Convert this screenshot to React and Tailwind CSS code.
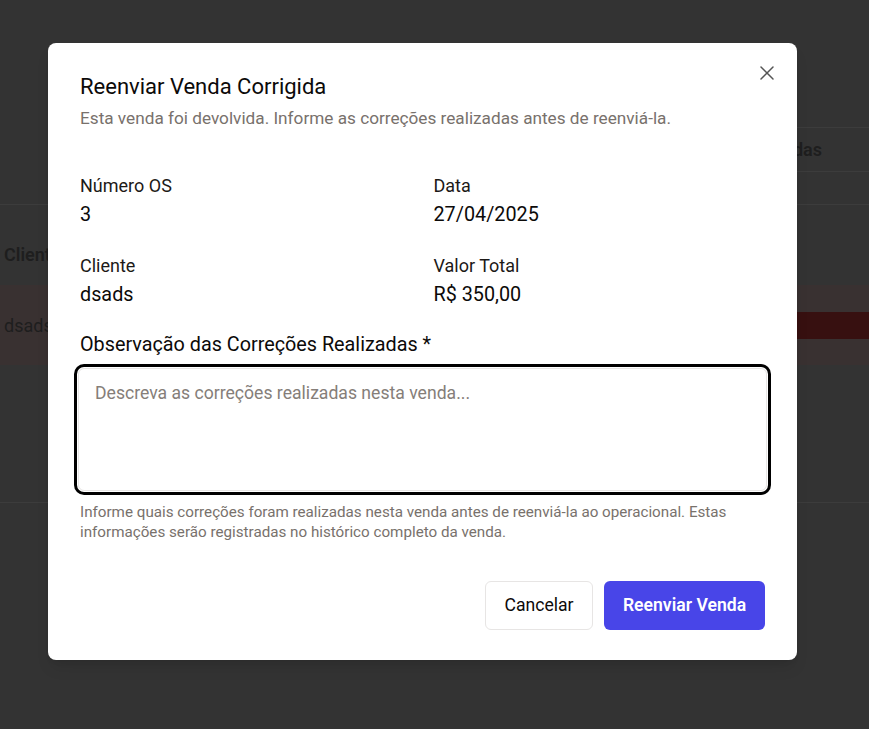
import React from "react";
import { X } from "lucide-react";

const font = { fontFamily: "Roboto, 'Noto Sans', sans-serif" };

function Field({ label, value }) {
  return (
    <div className="flex flex-col">
      <span className="text-[18px] leading-[24px] text-[#1c1917]">{label}</span>
      <span className="mt-[3px] text-[19.8px] leading-[28px] text-[#0c0a09]">{value}</span>
    </div>
  );
}

export default function App() {
  return (
    <div className="relative w-full h-[729px] overflow-hidden bg-[#333333]" style={font}>
      {/* background page (under overlay) */}
      <div className="flex flex-col">
        <div className="h-[127px]" />
        <div className="flex justify-end">
          <div className="w-[300px] h-[45px] border-y border-[#3c3c3c] flex items-center justify-end pr-[47px] text-[18px] font-semibold text-[#1e1e1e]">
            Alteradas
          </div>
        </div>
        <div className="h-[32px]" />
        <div className="h-[81px] border-t border-[#3c3c3c] pt-[38px] pl-1 text-[18px] leading-[24px] font-semibold text-[#1e1e1e]">
          Cliente
        </div>
        <div className="h-[80px] bg-[#393131] flex items-center justify-between pl-1">
          <span className="text-[18px] text-[#1e1e1e]">dsads</span>
          <div className="w-[300px] h-[27px] bg-[#371010]" />
        </div>
        <div className="h-[137px]" />
        <div className="border-t border-[#3c3c3c]" />
      </div>

      {/* modal */}
      <div className="absolute left-[48px] top-[43px] w-[749px] h-[617px] bg-white rounded-lg shadow-lg px-8 pt-[30px] pb-[30px] flex flex-col">
        <button className="absolute right-[18px] top-[18px] text-[#555]" aria-label="Fechar">
          <X size={24} strokeWidth={1.5} />
        </button>
        <h2 className="text-[22px] leading-[28px] text-[#0c0a09]">Reenviar Venda Corrigida</h2>
        <p className="mt-[5px] text-[17.2px] leading-[24px] text-[#78716c]">
          Esta venda foi devolvida. Informe as correções realizadas antes de reenviá-la.
        </p>

        <div className="mt-[44px] grid grid-cols-2 gap-x-[22px] gap-y-[25px]">
          <Field label="Número OS" value="3" />
          <Field label="Data" value="27/04/2025" />
          <Field label="Cliente" value="dsads" />
          <Field label="Valor Total" value="R$ 350,00" />
        </div>

        <label className="mt-[22px] text-[19.8px] leading-[28px] text-[#0c0a09]">
          Observação das Correções Realizadas *
        </label>
        <textarea
          className="mt-[9px] mx-[-2px] h-[123px] resize-none rounded-md border border-[#e7e5e4] bg-white px-4 py-3 text-[17.6px] leading-[24px] text-[#0c0a09] placeholder:text-[#857e79] outline-none ring-[3px] ring-black ring-offset-1 ring-offset-white"
          placeholder="Descreva as correções realizadas nesta venda..."
        />
        <p className="mt-[11px] text-[15.2px] leading-[20px] text-[#78716c]">
          Informe quais correções foram realizadas nesta venda antes de reenviá-la ao operacional. Estas
          informações serão registradas no histórico completo da venda.
        </p>

        <div className="mt-auto flex justify-end gap-[11px]">
          <button className="h-[49px] w-[108px] rounded-md border border-[#e7e5e4] bg-white text-[17.6px] text-[#0c0a09]">
            Cancelar
          </button>
          <button className="h-[49px] w-[161px] rounded-md bg-[#4845e8] text-[17.6px] font-semibold text-white">
            Reenviar Venda
          </button>
        </div>
      </div>
    </div>
  );
}
